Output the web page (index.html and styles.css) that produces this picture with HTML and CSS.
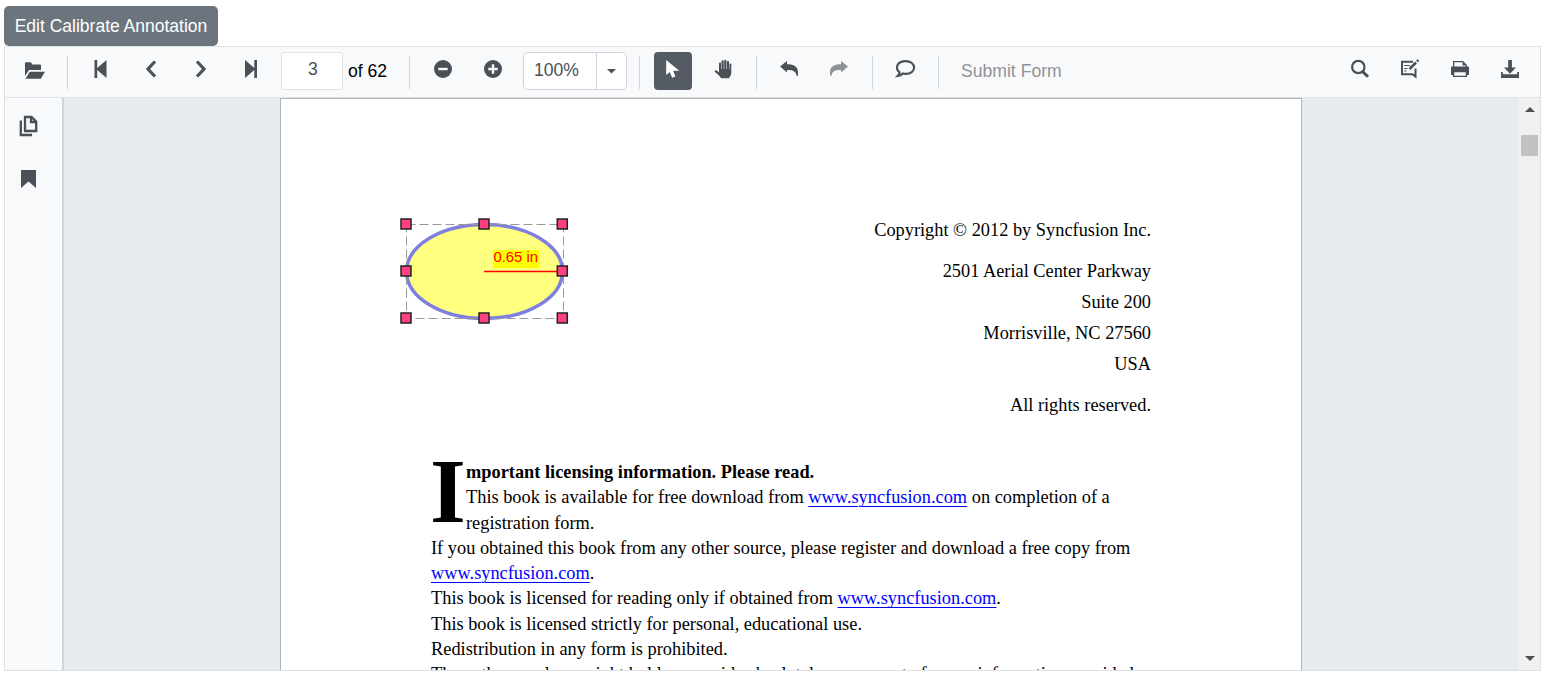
FILE: index.html
```
<!DOCTYPE html>
<html lang="en">
<head>
<meta charset="utf-8">
<title>PDF Viewer</title>
<link rel="stylesheet" href="styles.css">
</head>
<body>
<button class="edit-btn">Edit Calibrate Annotation</button>
<main class="viewer">
  <div class="toolbar">
    <button class="tool open"><svg class="icon" viewBox="0 0 20 20"><path d="M0 17V4q0-.8.8-.8h5l1.700 2.300h7.700q.8 0 .8.800v4.700H4z"/><path d="M4.800 12.700H20l-4.200 7H.5z"/></svg></button>
    <i class="sep s1"></i>
    <button class="tool first"><svg class="icon" viewBox="0 0 20 20"><path d="M3.500 1h2.700v8L15.500 1v18l-9.300-8v8H3.500z"/></svg></button>
    <button class="tool"><svg class="icon line" viewBox="0 0 20 20"><path d="M14 2.500 7 10l7 7.500"/></svg></button>
    <button class="tool"><svg class="icon line" viewBox="0 0 20 20"><path d="M6 2.500 13 10l-7 7.500"/></svg></button>
    <button class="tool"><svg class="icon" viewBox="0 0 20 20"><path d="M16 1h-2.700v8L4 1v18l9.300-8v8H16z"/></svg></button>
    <div class="page-input">3</div>
    <span class="total">of 62</span>
    <i class="sep"></i>
    <button class="tool zoom-out"><svg class="icon" viewBox="0 0 20 20"><circle cx="10" cy="10" r="9"/><path class="cut" d="M5.300 8.800h9.400v2.400H5.300z"/></svg></button>
    <button class="tool"><svg class="icon" viewBox="0 0 20 20"><circle cx="10" cy="10" r="9"/><path class="cut" d="M5.300 8.800h3.500V5.300h2.400v3.500h3.500v2.400h-3.500v3.500H8.800v-3.500H5.300z"/></svg></button>
    <div class="combo"><span class="combo-value">100%</span><span class="combo-arrow"><svg width="9" height="5" viewBox="0 0 9 5"><path d="M0 0h9L4.500 4.500z"/></svg></span></div>
    <i class="sep s3"></i>
    <button class="tool select"><svg class="icon" viewBox="0 0 20 20"><path d="M3.200 1v15l3.500-3.100 2.500 5.800 3.200-1.300-2.300-5.600h6.100z"/></svg></button>
    <button class="tool hand"><svg class="icon" viewBox="0 0 20 20"><path d="M5 12V4.500q0-1 1-1t1 1V10h.5V2.300q0-1.100 1.100-1.100t1.100 1.100V10h.5V1.900q0-1.100 1.100-1.100t1.100 1.100V10h.5V3q0-1.100 1.100-1.100T15.100 3v7.300h.4V5.500q0-.9.900-.9t.9.900v8.200q0 3-2 4.800v.7H7.200q-1-1.100-2.200-2.600L.8 12.800q-.6-1 .4-1.400 1.100-.3 2.200.5l1.600 1.500z"/></svg></button>
    <i class="sep s4"></i>
    <button class="tool undo"><svg class="icon" viewBox="0 0 20 20"><path d="M1 7.600 8 2v3.300c6.500-.2 11 2.300 11 8v3.500h-1.500c-.2-4-3.500-6-9.500-5.800v2.500z"/></svg></button>
    <button class="tool dim"><svg class="icon" viewBox="0 0 20 20"><path d="M19 7.600 12 2v3.300c-6.500-.2-11 2.300-11 8v3.500h1.500c.2-4 3.500-6 9.500-5.800v2.500z"/></svg></button>
    <i class="sep s5"></i>
    <button class="tool comment"><svg class="icon thin" viewBox="0 0 20 20"><path d="M4.600 13.400C-.2 9.800 1.500 2.200 10.700 2.200c5 0 8.400 2.700 8.400 6.300s-3.400 6.400-8.400 6.400c-1.100 0-2-.1-2.900-.4-1.300 1.500-2.900 2.300-5 2.400 1.100-1 1.700-2.200 1.800-3.500z"/></svg></button>
    <i class="sep s5"></i>
    <span class="submit">Submit Form</span>
    <div class="right-tools">
      <button class="tool"><svg class="icon thin" viewBox="0 0 20 20"><circle cx="8.300" cy="8" r="6.200"/><path class="handle" d="m12.700 12.600 5.300 5.200"/></svg></button>
      <button class="tool"><svg class="icon edit" viewBox="0 0 20 20"><path d="M13 2.800H2v12.400h10.500l3 2.400V9.500"/><path class="rule" d="M4.200 6.500h5.600M4.200 9.500h3.300M4.200 12h2.300"/><path class="pen" d="m9.500 10 6.500-6.500"/><path class="pen" d="m17 2.500 1.400-1.400"/></svg></button>
      <button class="tool"><svg class="icon" viewBox="0 0 20 20"><path fill-rule="evenodd" d="M3 7.500V2h10l4 4v1.500h1q1 0 1 1V16h-2v2H3v-2H1V8.500q0-1 1-1zm1.300 0h11.400V6.500h-3.200V3.300H4.300zm0 5.700v3.500h11.400v-3.500z"/></svg></button>
      <button class="tool"><svg class="icon" viewBox="0 0 20 20"><path d="M8.200 1h3.700v7.500H16L10 14.800 4 8.500h4.200zM1 13h1.800v2.300h14.400V13H19v6H1z"/></svg></button>
    </div>
  </div>
  <div class="body">
    <aside class="sidebar">
      <svg class="pages" viewBox="0 0 20 22"><path d="M6 2h6.500L17.200 6.500V16H6zM1.800 5.500V20H13M12 2v5h5"/></svg>
      <svg class="mark" viewBox="0 0 15 18"><path d="M0 0h15v18l-7.500-6.500L0 18z"/></svg>
    </aside>
    <section class="canvas">
      <article class="page">
        <div class="address">
          <p class="copy">Copyright © 2012 by Syncfusion Inc.</p>
          <p>2501 Aerial Center Parkway</p>
          <p>Suite 200</p>
          <p>Morrisville, NC 27560</p>
          <p class="usa">USA</p>
          <p>All rights reserved.</p>
        </div>
        <div class="license">
          <span class="dropcap">I</span>
          <p><b>mportant licensing information. Please read.</b></p>
          <p>This book is available for free download from <a>www.syncfusion.com</a> on completion of a<br>registration form.</p>
          <p>If you obtained this book from any other source, please register and download a free copy from<br><a>www.syncfusion.com</a>.</p>
          <p>This book is licensed for reading only if obtained from <a>www.syncfusion.com</a>.</p>
          <p>This book is licensed strictly for personal, educational use.</p>
          <p>Redistribution in any form is prohibited.</p>
          <p>The authors and copyright holders provide absolutely no warranty for any information provided.</p>
        </div>
        <svg class="annotation" width="180" height="112" viewBox="0 0 180 112">
          <ellipse cx="89.500" cy="56.500" rx="78" ry="47"/>
          <path class="bounds" d="M11.500 9.500h157v94h-157z"/>
          <rect class="label-bg" x="98" y="35" width="46" height="18"/>
          <text x="98.500" y="47">0.65 in</text>
          <path class="radius" d="M89 56.500h78"/>
          <g class="grips">
            <path d="M6 4h10v10H6zM84 4h10v10H84zM162.300 4h10v10h-10zM6 51h10v10H6zM162.300 51h10v10h-10zM6 98h10v10H6zM84 98h10v10H84zM162.300 98h10v10h-10z"/>
          </g>
        </svg>
      </article>
    </section>
    <div class="scrollbar">
      <svg width="10" height="5" viewBox="0 0 10 5"><path d="M0 5h10L5 0z"/></svg>
      <i class="thumb"></i>
      <svg class="down" width="10" height="5" viewBox="0 0 10 5"><path d="M0 0h10L5 5z"/></svg>
    </div>
  </div>
</main>
</body>
</html>
```
FILE: styles.css
```
* { box-sizing: border-box; }
body { margin: 0; padding: 6px 4px 0; height: 676px; overflow: hidden; background: #fff; font-family: "Liberation Sans", Arial, sans-serif; font-size: 17.6px; color: #212529; }
button { border: 0; padding: 0; background: none; font: inherit; }
p { margin: 0; }
.edit-btn { display: block; width: 214px; height: 40px; border-radius: 5px; background: #6c757d; color: #fff; font-size: 17.5px; white-space: nowrap; }
.viewer { width: 1537px; height: 625px; border: 1px solid #dee2e6; display: flex; flex-direction: column; }
.toolbar { display: flex; align-items: center; height: 51px; flex: none; padding: 0 5px; background: #f8f9fa; border-bottom: 1px solid #dee2e6; }
.tool { width: 50px; height: 50px; padding-bottom: 6px; display: flex; align-items: center; justify-content: center; flex: none; }
.icon { width: 20px; height: 20px; display: block; fill: #495057; overflow: visible; }
.icon .cut { fill: #f8f9fa; }
.line { fill: none; stroke: #495057; stroke-width: 3.2; }
.thin { fill: none; stroke: #495057; stroke-width: 2.2; }
.handle { stroke-width: 3; }
.edit { fill: none; stroke: #495057; stroke-width: 2; }
.edit .rule { stroke-width: 1.2; }
.edit .pen { stroke-width: 2.6; }
.sep { width: 1px; height: 33px; flex: none; background: #ced4da; }
.s1 { margin-left: 7px; }
.s3 { margin-left: 12px; }
.s4 { margin-left: 7px; }
.s5 { margin-left: 8px; }
.first, .zoom-out { margin-left: 8px; }
.page-input { width: 62px; height: 38px; margin: 0 5px; margin-bottom: 2px; padding-left: 2px; flex: none; border: 1px solid #dee2e6; border-radius: 3px; background: #fff; color: #495057; line-height: 33px; text-align: center; }
.total { width: 61px; flex: none; color: #000; padding-bottom: 1px; }
.combo { width: 104px; height: 38px; margin: 0 0 2px 5px; flex: none; display: flex; background: #fff; border: 1px solid #ced4da; border-radius: 5px; color: #495057; line-height: 34px; }
.combo-value { width: 73px; padding-left: 10px; border-right: 1px solid #ced4da; }
.combo-arrow { flex: 1; display: flex; align-items: center; justify-content: center; fill: #495057; }
.select { width: 38px; height: 38px; margin: 0 0 2px 14px; padding-bottom: 4px; background: #545b62; border-radius: 4px; }
.select .icon { fill: #fff; }
.hand, .undo, .comment { margin-left: 7px; }
.dim .icon { fill: #8e9296; }
.submit { margin-left: 22px; padding-bottom: 1px; color: #909397; }
.right-tools { margin-left: auto; display: flex; }
.body { display: flex; flex: 1; min-height: 0; }
.sidebar { width: 59px; flex: none; background: #f8f9fa; border-right: 2px solid #ced4da; padding: 17px 0 0 14px; }
.sidebar svg { display: block; }
.pages { width: 20px; height: 22px; fill: none; stroke: #495057; stroke-width: 2.3; }
.mark { width: 15px; height: 18px; margin: 33px 0 0 2px; fill: #495057; }
.canvas { flex: 1; overflow: hidden; background: #e8ebee; padding-left: 216px; }
.page { position: relative; width: 1022px; height: 1320px; background: #fff; border: 1px solid #adb5bd; padding: 116px 149px 0 150px; font-family: "Liberation Serif", "Times New Roman", serif; font-size: 18.35px; color: #000; }
.address { text-align: right; line-height: 31.2px; height: 241px; margin-right: 1px; white-space: nowrap; }
.copy, .usa { margin-bottom: 9.6px; }
.license { line-height: 25.3px; white-space: nowrap; padding-top: 4px; }
.license a { color: #0000ff; text-decoration: underline; text-decoration-thickness: 1px; text-underline-offset: 3px; }
.dropcap { float: left; width: 35px; height: 70px; font-size: 92px; line-height: 63px; font-weight: bold; text-indent: -1px; }
.annotation { position: absolute; left: 114px; top: 116px; }
.annotation ellipse { fill: #ffff80; stroke: #7f7fdf; stroke-width: 3.5; }
.bounds { fill: none; stroke: #999; stroke-width: 1; stroke-dasharray: 9 4; }
.label-bg { fill: #ffff00; }
.annotation text { font-family: "Liberation Sans", Arial, sans-serif; font-size: 14.8px; fill: #f00; }
.radius { stroke: #f00; stroke-width: 1.5; }
.grips { fill: #ff4081; stroke: #222; stroke-width: 1.5; }
.scrollbar { width: 21px; flex: none; display: flex; flex-direction: column; align-items: center; background: #f0f0f0; padding: 9px 0; fill: #505050; }
.thumb { width: 17px; height: 21px; margin-top: 23px; background: #c1c1c1; }
.down { margin-top: auto; }
```
